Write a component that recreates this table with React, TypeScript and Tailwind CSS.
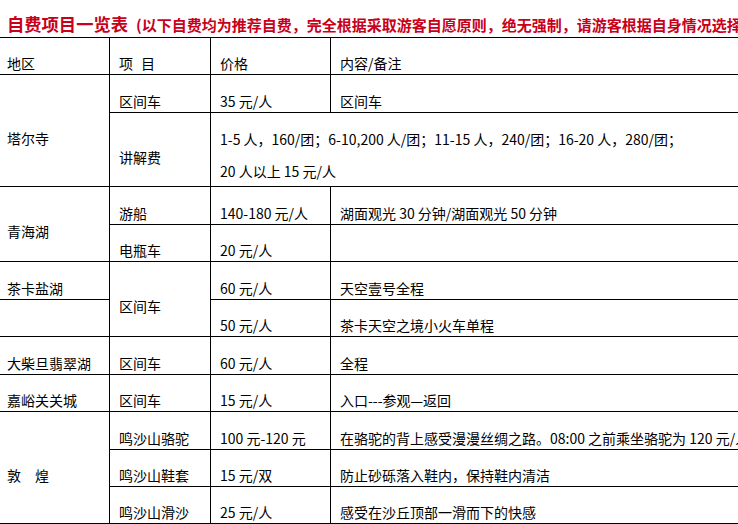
import React from "react";

type Cell = {
  text?: React.ReactNode;
  span?: string;
  tall?: boolean;
  first?: boolean;
};

const cells: Cell[] = [
  { text: "地区", first: true },
  { text: <>项<span className="inline-block w-[8px]" />目</> },
  { text: "价格" },
  { text: "内容/备注" },

  { text: "塔尔寺", span: "row-span-2", first: true },
  { text: "区间车" },
  { text: "35 元/人" },
  { text: "区间车" },

  { text: "讲解费" },
  {
    text: (
      <>
        1-5 人，160/团；6-10,200 人/团；11-15 人，240/团；16-20 人，280/团；
        <br />
        20 人以上 15 元/人
      </>
    ),
    span: "col-span-2",
    tall: true,
  },

  { text: "青海湖", span: "row-span-2", first: true },
  { text: "游船" },
  { text: "140-180 元/人" },
  { text: "湖面观光 30 分钟/湖面观光 50 分钟" },

  { text: "电瓶车" },
  { text: "20 元/人" },
  { text: "" },

  { text: "茶卡盐湖", first: true },
  { text: "区间车", span: "row-span-2" },
  { text: "60 元/人" },
  { text: "天空壹号全程" },

  { text: "", first: true },
  { text: "50 元/人" },
  { text: "茶卡天空之境小火车单程" },

  { text: "大柴旦翡翠湖", first: true },
  { text: "区间车" },
  { text: "60 元/人" },
  { text: "全程" },

  { text: "嘉峪关关城", first: true },
  { text: "区间车" },
  { text: "15 元/人" },
  { text: "入口---参观—返回" },

  { text: "敦\u3000煌", span: "row-span-3", first: true },
  { text: "鸣沙山骆驼" },
  { text: "100 元-120 元" },
  { text: "在骆驼的背上感受漫漫丝绸之路。08:00 之前乘坐骆驼为 120 元/人，之后为 100 元/人" },

  { text: "鸣沙山鞋套" },
  { text: "15 元/双" },
  { text: "防止砂砾落入鞋内，保持鞋内清洁" },

  { text: "鸣沙山滑沙" },
  { text: "25 元/人" },
  { text: "感受在沙丘顶部一滑而下的快感" },
];

export default function App() {
  return (
    <div
      className="relative h-[524px] w-[738px] overflow-hidden bg-white text-black"
      style={{ fontFamily: '"Noto Sans CJK SC", "Noto Sans", sans-serif' }}
    >
      <div className="flex h-[37px] items-end whitespace-nowrap pb-[2px] pl-[7px] font-bold text-[#c8001a]">
        <span className="text-[17.3px] leading-[22px]">自费项目一览表</span>
        <span className="ml-[8px] text-[15px] leading-[20px]">
          (以下自费均为推荐自费，完全根据采取游客自愿原则，绝无强制，请游客根据自身情况选择参加)
        </span>
      </div>
      <div className="grid w-[951px] grid-cols-[110px_101px_120px_620px] grid-rows-[37px_38px_74px_38px_37px_38px_37px_38px_37px_38px_37px_37px] border-t border-black text-[14px]">
        {cells.map((c, i) => (
          <div
            key={i}
            className={`flex items-center overflow-hidden whitespace-nowrap border-r border-b border-black ${
              c.first ? "pl-[7px]" : "pl-[9px]"
            } ${c.tall ? "pt-[10px] leading-[32px]" : "pt-[14px] leading-[20px]"} ${c.span ?? ""}`}
          >
            <div>{c.text}</div>
          </div>
        ))}
      </div>
    </div>
  );
}
